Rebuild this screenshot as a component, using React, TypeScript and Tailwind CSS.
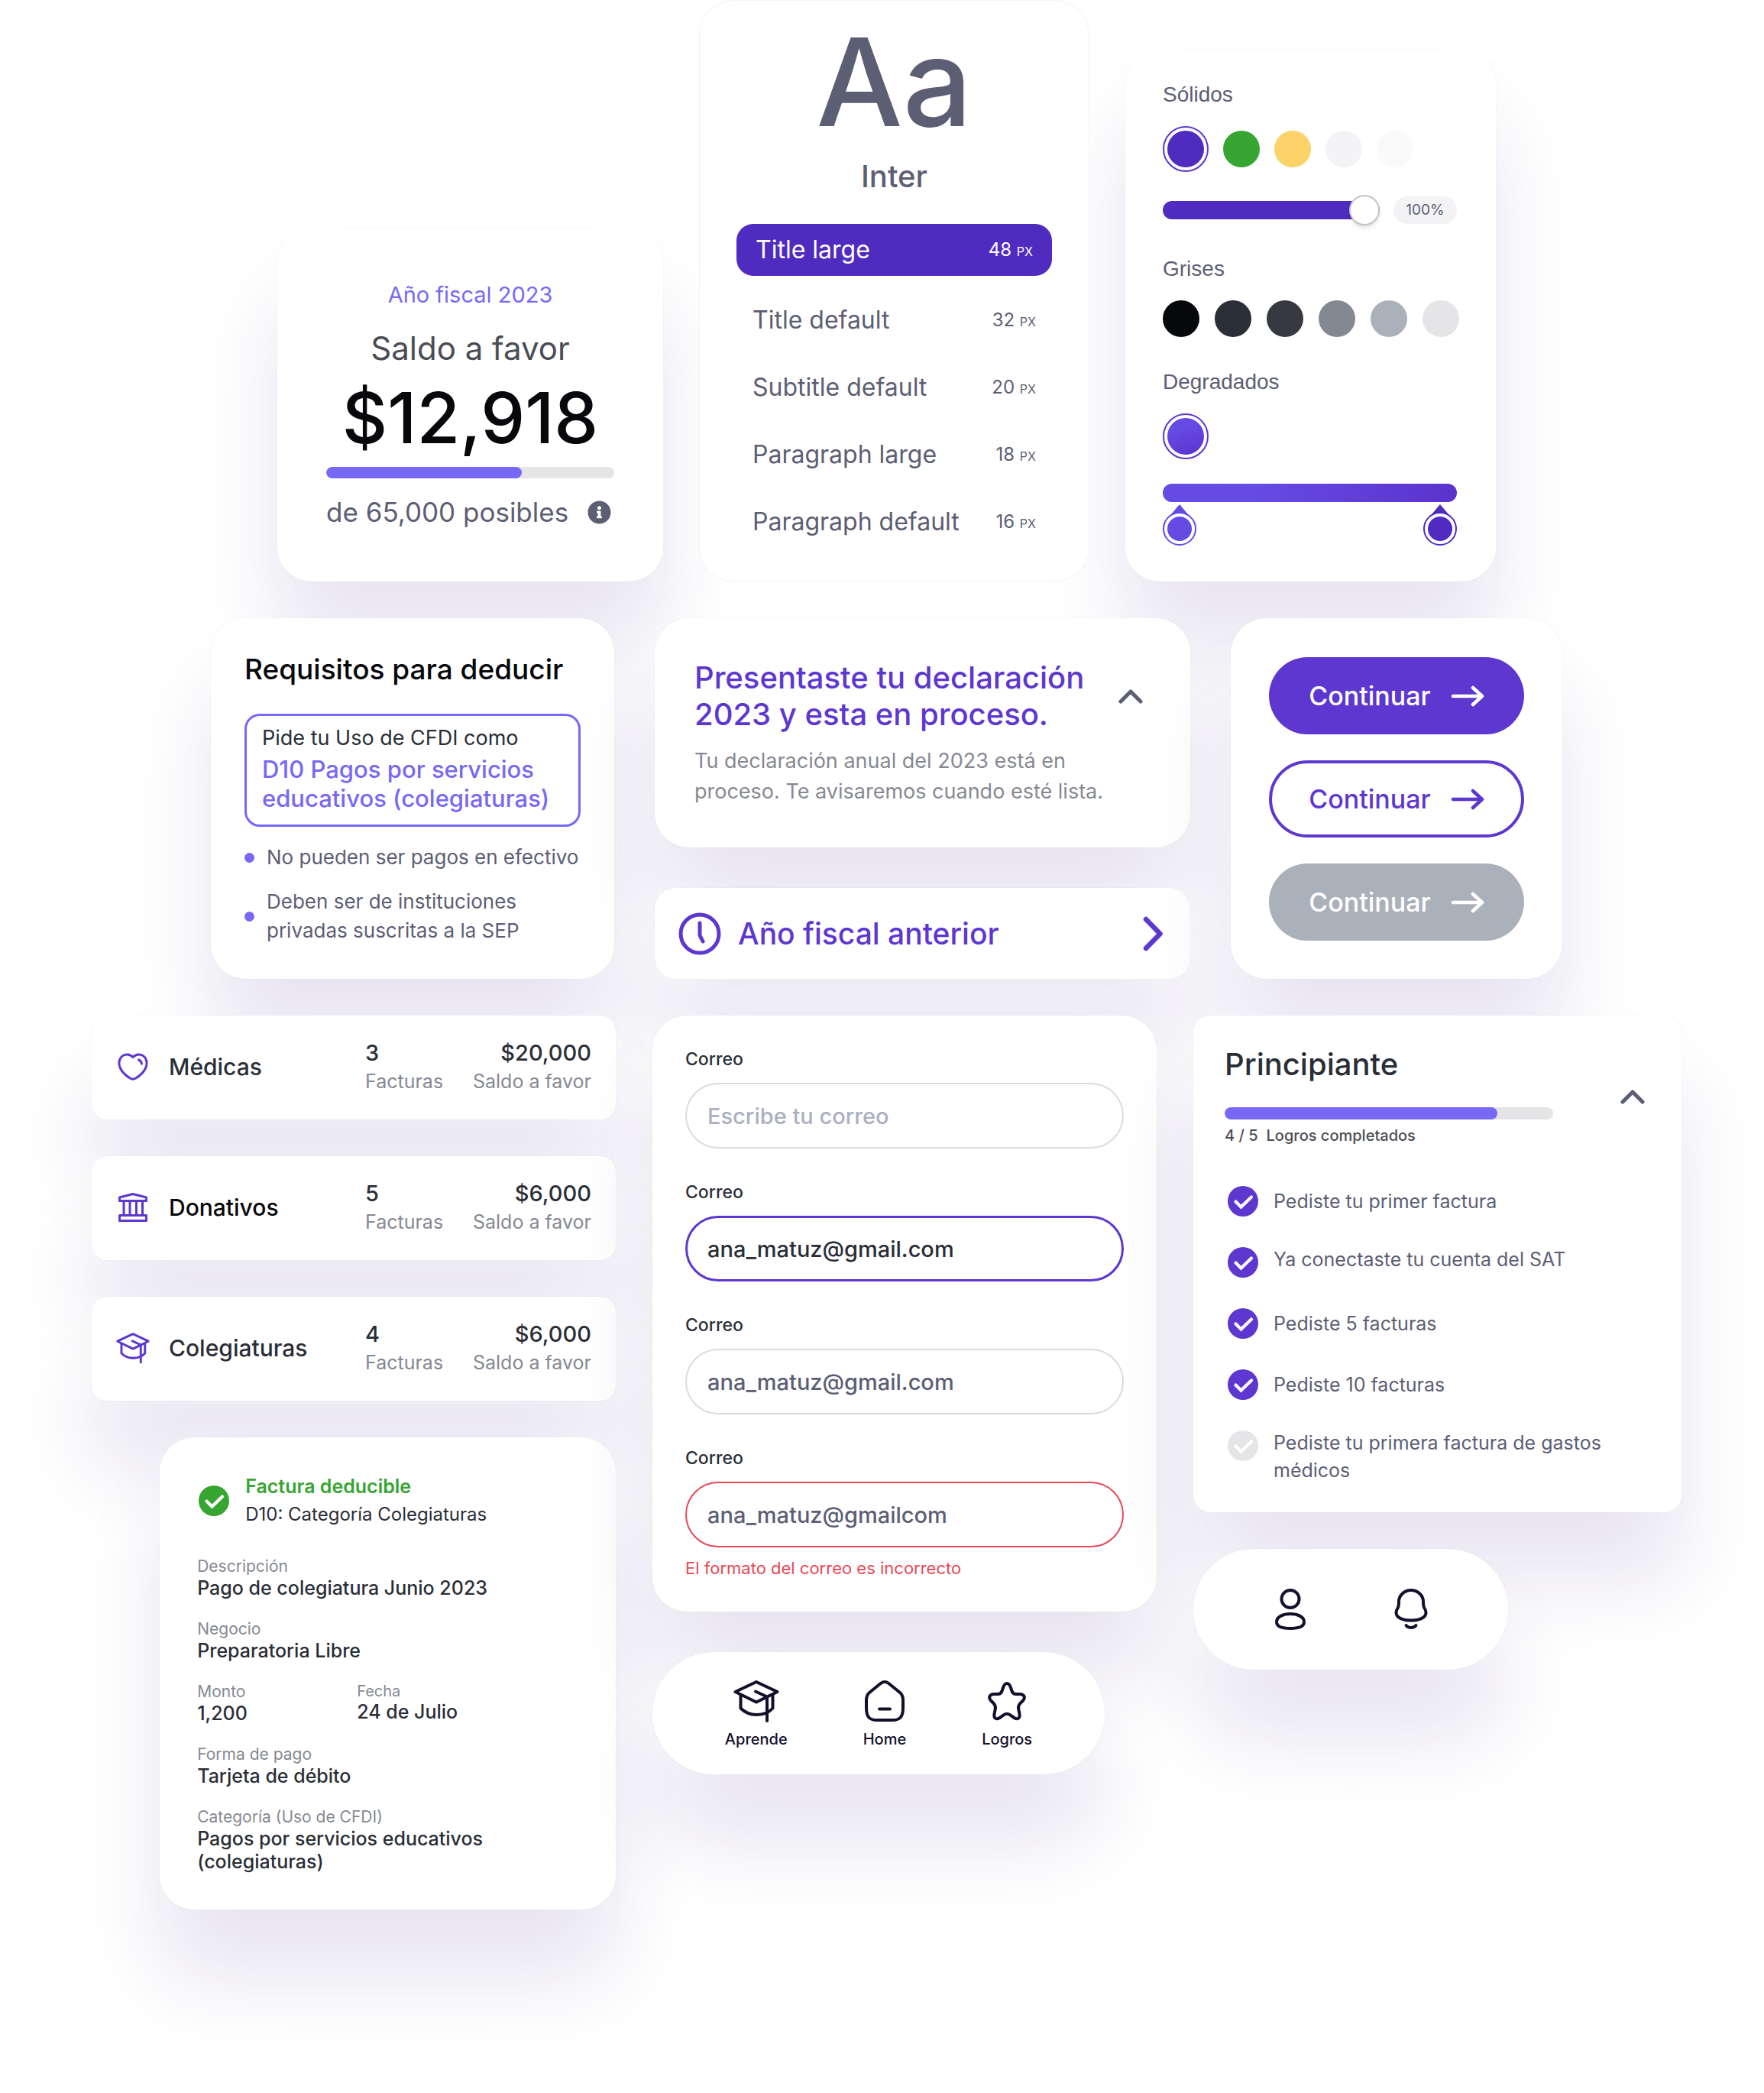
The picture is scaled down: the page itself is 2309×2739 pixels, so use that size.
import React from "react";
import { FaInfoCircle } from "react-icons/fa";

const SHADOW = "shadow-[0_0_2px_rgba(46,19,119,0.07),0_90px_110px_rgba(46,19,119,0.11)]";

type IconProps = { className?: string };

function CapIcon({ className }: IconProps) {
  return (
    <svg viewBox="0 0 60 56" fill="none" stroke="currentColor" strokeWidth="4" strokeLinecap="round" strokeLinejoin="round" className={className} aria-hidden="true">
      <path d="M30 3 57.5 16 30 29.5 2.5 16Z" />
      <path d="M9.5 20.5V37.5C15 43 22 46 30.5 46S46.5 43 51.5 37.5V20.5" />
      <path d="M29 15.5 44 22.5V54" />
    </svg>
  );
}

function HeartIcon({ className }: IconProps) {
  return (
    <svg viewBox="-2 -4 44 44" fill="none" stroke="currentColor" strokeWidth="3" strokeLinecap="round" strokeLinejoin="round" className={className} aria-hidden="true">
      <path d="M20 5.5C16 1.2 9.5.8 5.5 4.5 1.2 8.5 1 15 3.5 20 6.5 26 12 30.5 16.7 33.2 18.8 34.4 21.2 34.4 23.3 33.2 28 30.5 33.5 26 36.5 20 39 15 38.8 8.5 34.5 4.5 30.5.8 24 1.2 20 5.5Z" />
      <path d="M27.5 9C29.8 9.8 31.2 11.6 31.4 14.2" />
    </svg>
  );
}

function BankIcon({ className }: IconProps) {
  return (
    <svg viewBox="-3 -3 44 44" fill="none" stroke="currentColor" strokeWidth="3" strokeLinecap="round" strokeLinejoin="round" className={className} aria-hidden="true">
      <path d="M1.5 6 19 1.5 36.5 6V10.5H1.5Z" />
      <path d="M7 11V29M15 11V29M23.5 11V29M31.5 11V29" />
      <path d="M1.5 29.5H36.5V36.5H1.5Z" />
    </svg>
  );
}

function CheckIcon({ className }: IconProps) {
  return (
    <svg viewBox="0 0 44 44" className={className} aria-hidden="true">
      <circle cx="22" cy="22" r="20" fill="currentColor" />
      <path d="M12.5 22.5 19.5 29.5 33 16.500" fill="none" stroke="#fff" strokeWidth="4.2" strokeLinecap="round" strokeLinejoin="miter" />
    </svg>
  );
}

function ChevronUp({ className }: IconProps) {
  return (
    <svg viewBox="0 0 32 20" fill="none" stroke="currentColor" strokeWidth="5" strokeLinecap="round" strokeLinejoin="round" className={className} aria-hidden="true">
      <path d="M3 17 16 4 29 17" />
    </svg>
  );
}

function ArrowRight() {
  return (
    <svg viewBox="0 0 44 28" fill="none" stroke="currentColor" strokeWidth="4.5" strokeLinecap="round" strokeLinejoin="round" className="h-7 w-11" aria-hidden="true">
      <path d="M3 14H41M29 3 41 14 29 25" />
    </svg>
  );
}

function BalanceCard() {
  return (
    <section className={`min-w-0 rounded-[45px] bg-white px-16 pt-[68px] pb-[69px] text-center ${SHADOW}`}>
      <p className="text-[29px]/[36px] text-[#7768f6]">Año fiscal 2023</p>
      <h2 className="mt-[26px] text-[42px]/[52px] text-[#4b4d55]">Saldo a favor</h2>
      <p className="mt-[17px] text-[92px]/[96px] font-medium text-[#07080b]">$12,918</p>
      <div role="progressbar" aria-valuenow={68} aria-label="Saldo a favor" className="mt-4 h-[15px] overflow-hidden rounded-full bg-[#e5e5e7]">
        <div className="h-full w-[68%] rounded-full bg-[#7768f6]" />
      </div>
      <div className="mt-[22px] flex items-center justify-between pr-1">
        <p className="text-[35px]/[44px] text-[#5c5e74]">de 65,000 posibles</p>
        <button type="button" aria-label="Información" className="text-[#5c5e74]">
          <FaInfoCircle size={31} />
        </button>
      </div>
    </section>
  );
}

const STYLES = [
  { name: "Title large", size: 48 },
  { name: "Title default", size: 32 },
  { name: "Subtitle default", size: 20 },
  { name: "Paragraph large", size: 18 },
  { name: "Paragraph default", size: 16 },
];

function TypeCard() {
  return (
    <section className="relative min-w-0 rounded-[45px] border border-[#f3f3f5] bg-white px-12 pt-[26px] pb-[33px] text-[#5c5e74]">
      <p className="text-center text-[160px]/[160px] font-medium">Aa</p>
      <h2 className="mt-5 text-center text-[40px]/[48px] font-medium">Inter</h2>
      <ul className="mt-[38px]">
        {STYLES.map((s, i) => (
          <li key={s.name}>
            <button
              type="button"
              className={
                i === 0
                  ? "mb-3.5 flex h-[68px] w-full items-center justify-between rounded-[22px] bg-[#502bc0] px-[25px] text-white"
                  : "flex h-[88px] w-full items-center justify-between px-[21px]"
              }
            >
              <span className="text-[32px]/[40px]">{s.name}</span>
              <span className="text-2xl">
                {s.size} <span className="text-base">PX</span>
              </span>
            </button>
          </li>
        ))}
      </ul>
    </section>
  );
}

function RingSwatch({ label, className }: { label: string; className: string }) {
  return (
    <button type="button" aria-label={label} className="flex size-[60px] shrink-0 items-center justify-center rounded-full border-2 border-[#5d37d0]">
      <span className={`size-12 rounded-full ${className}`} />
    </button>
  );
}

function Pointer({ color }: { color: string }) {
  return (
    <svg viewBox="0 0 44 54" className="h-[54px] w-11" aria-hidden="true">
      <path d="M22 0 33 13H11Z" fill={color} />
      <circle cx="22" cy="32" r="21" fill="#fff" stroke={color} strokeWidth="2" />
      <circle cx="22" cy="32" r="16" fill={color} />
    </svg>
  );
}

const SOLIDS = [
  { label: "Verde", className: "bg-[#37a532]" },
  { label: "Amarillo", className: "bg-[#fbd369]" },
  { label: "Gris claro", className: "bg-[#f4f4f6]" },
  { label: "Blanco humo", className: "bg-[#fafafb]" },
];

const GREYS = [
  { label: "Negro", className: "bg-[#07080b]" },
  { label: "Gris 900", className: "bg-[#2a2e37]" },
  { label: "Gris 800", className: "bg-[#36393f]" },
  { label: "Gris 500", className: "bg-[#848893]" },
  { label: "Gris 400", className: "bg-[#abb1bb]" },
  { label: "Gris 200", className: "bg-[#e5e5e7]" },
];

function ColorsCard() {
  const heading = "font-['Liberation_Sans',Arial,sans-serif] text-[28px]/[32px] text-[#5c5e74]";
  return (
    <section className={`min-w-0 rounded-[45px] bg-white pt-[43px] pr-[51px] pb-[47px] pl-[49px] ${SHADOW}`}>
      <h3 className={heading}>Sólidos</h3>
      <div className="mt-[25px] flex items-center gap-[19px]">
        <RingSwatch label="Morado" className="bg-[#502bc0]" />
        {SOLIDS.map((c) => (
          <button key={c.label} type="button" aria-label={c.label} className={`size-12 shrink-0 rounded-full ${c.className}`} />
        ))}
      </div>
      <div className="mt-[30px] flex h-10 items-center gap-[18px]">
        <input
          type="range"
          aria-label="Opacidad"
          defaultValue={100}
          className="h-6 min-w-0 flex-1 appearance-none rounded-full bg-[#502bc0] [&::-webkit-slider-thumb]:size-10 [&::-webkit-slider-thumb]:appearance-none [&::-webkit-slider-thumb]:rounded-full [&::-webkit-slider-thumb]:border-2 [&::-webkit-slider-thumb]:border-[#c4c5cb] [&::-webkit-slider-thumb]:bg-white [&::-webkit-slider-thumb]:shadow-md"
        />
        <output className="flex h-9 w-[83px] items-center justify-center rounded-full bg-[#f3f3f5] text-[19px] text-[#5c5e74]">100%</output>
      </div>
      <h3 className={`mt-[41px] ${heading}`}>Grises</h3>
      <div className="mt-[25px] flex gap-5">
        {GREYS.map((c) => (
          <button key={c.label} type="button" aria-label={c.label} className={`size-12 shrink-0 rounded-full ${c.className}`} />
        ))}
      </div>
      <h3 className={`mt-[43px] ${heading}`}>Degradados</h3>
      <div className="mt-[25px]">
        <RingSwatch label="Degradado morado" className="bg-linear-160 from-[#654be4] from-30% to-[#5b32cd]" />
      </div>
      <div className="mt-8 h-6 rounded-full bg-linear-to-r from-[#654be4] from-30% to-[#5b32cd]" />
      <div className="mt-[3px] flex justify-between">
        <Pointer color="#654be4" />
        <Pointer color="#502bc0" />
      </div>
    </section>
  );
}

function RequirementsCard() {
  const items = ["No pueden ser pagos en efectivo", "Deben ser de instituciones privadas suscritas a la SEP"];
  return (
    <section className={`rounded-[45px] bg-white px-11 pt-[45px] pb-11 ${SHADOW}`}>
      <h2 className="text-[37px]/[44px] font-medium text-[#07080b]">Requisitos para deducir</h2>
      <div className="mt-9 rounded-[20px] border-3 border-[#7768f6] px-5 pt-3 pb-[15px]">
        <p className="text-[27px]/[34px] text-[#2a2e37]">Pide tu Uso de CFDI como</p>
        <p className="mt-[5px] text-[31px]/[38px] font-medium text-[#7768f6]">D10 Pagos por servicios educativos (colegiaturas)</p>
      </div>
      <ul className="mt-[21px] flex flex-col gap-5">
        {items.map((t) => (
          <li key={t} className="flex items-center gap-4 text-[26px]/[38px] text-[#5c5e74]">
            <span className="size-[13px] shrink-0 rounded-full bg-[#7768f6]" />
            <span>{t}</span>
          </li>
        ))}
      </ul>
    </section>
  );
}

function DeclarationCard() {
  return (
    <section className={`rounded-[45px] bg-white pt-[54px] pr-[62px] pb-[53px] pl-[52px] ${SHADOW}`}>
      <div className="flex items-center justify-between">
        <h2 className="w-[530px] text-[40px]/[48px] font-medium text-[#5d37d0]">Presentaste tu declaración 2023 y esta en proceso.</h2>
        <button type="button" aria-label="Contraer" className="text-[#5c5e74]">
          <ChevronUp className="h-5 w-8" />
        </button>
      </div>
      <p className="mt-[17px] max-w-[555px] text-[27px]/[40px] text-[#868993]">Tu declaración anual del 2023 está en proceso. Te avisaremos cuando esté lista.</p>
    </section>
  );
}

function PreviousYear() {
  return (
    <a href="#anterior" className={`flex h-[119px] items-center rounded-[27px] bg-white pr-[34px] pl-[31px] text-[#5d37d0] ${SHADOW}`}>
      <svg viewBox="0 0 56 56" fill="none" stroke="currentColor" strokeWidth="5" strokeLinecap="round" strokeLinejoin="round" className="size-14" aria-hidden="true">
        <circle cx="28" cy="28" r="25" />
        <path d="M28 14V30L32 38" />
      </svg>
      <span className="ml-[22px] flex-1 text-[39px]/[48px] font-medium">Año fiscal anterior</span>
      <svg viewBox="0 0 28 48" fill="none" stroke="currentColor" strokeWidth="6.5" strokeLinecap="round" strokeLinejoin="round" className="h-12 w-7" aria-hidden="true">
        <path d="M4 5 22.5 24 4 43" />
      </svg>
    </a>
  );
}

function ButtonsCard() {
  const base = "flex h-[101px] items-center justify-center gap-[26px] rounded-full text-[34px]/[42px] font-medium";
  return (
    <section className={`flex flex-col gap-[34px] rounded-[47px] bg-white px-[50px] pt-[51px] pb-[49px] ${SHADOW}`}>
      <button type="button" className={`${base} bg-[#5d37d0] text-white`}>
        Continuar <ArrowRight />
      </button>
      <button type="button" className={`${base} border-4 border-[#5d37d0] text-[#5d37d0]`}>
        Continuar <ArrowRight />
      </button>
      <button type="button" disabled className={`${base} bg-[#abb1bb] text-white`}>
        Continuar <ArrowRight />
      </button>
    </section>
  );
}

function CategoryCard({ icon, name, nameClass, count, amount }: { icon: React.ReactNode; name: string; nameClass: string; count: number; amount: string }) {
  return (
    <section className={`flex items-center rounded-[20px] bg-white pt-[30px] pr-8 pb-8 pl-8 ${SHADOW}`}>
      <span className="text-[#5d37d0]">{icon}</span>
      <h3 className={`ml-[25px] flex-1 text-[30px]/[38px] font-medium ${nameClass}`}>{name}</h3>
      <div className="flex w-[296px] justify-between text-[#2a2e37]">
        <p className="text-[29px]/[38px] font-medium">
          {count}
          <span className="block text-[25px]/[36px] font-normal text-[#868993]">Facturas</span>
        </p>
        <p className="text-right text-[29px]/[38px] font-medium">
          {amount}
          <span className="block text-[25px]/[36px] font-normal text-[#868993]">Saldo a favor</span>
        </p>
      </div>
    </section>
  );
}

function Field({ label, value, small }: { label: string; value: string; small?: boolean }) {
  return (
    <div>
      <dt className={small ? "text-[20px]/[24px] text-[#868993]" : "text-[21px]/[26px] text-[#868993]"}>{label}</dt>
      <dd className="text-[25px]/[30px] font-medium text-[#2a2e37]">{value}</dd>
    </div>
  );
}

function InvoiceCard() {
  return (
    <section className={`ml-auto w-[87%] rounded-[45px] bg-white px-[49px] pt-[46px] pb-12 ${SHADOW}`}>
      <div className="flex items-center gap-[19px]">
        <CheckIcon className="size-11 text-[#37a532]" />
        <div>
          <h3 className="text-[25px]/[36px] font-semibold text-[#37a532]">Factura deducible</h3>
          <p className="text-2xl/[38px] text-[#2a2e37]">D10: Categoría Colegiaturas</p>
        </div>
      </div>
      <dl className="mt-9 flex flex-col gap-[26px]">
        <Field label="Descripción" value="Pago de colegiatura Junio 2023" />
        <Field label="Negocio" value="Preparatoria Libre" />
        <div className="grid grid-cols-[209px_1fr]">
          <Field label="Monto" value="1,200" />
          <Field label="Fecha" value="24 de Julio" small />
        </div>
        <Field label="Forma de pago" value="Tarjeta de débito" />
        <div className="max-w-[400px]">
          <Field label="Categoría (Uso de CFDI)" value="Pagos por servicios educativos (colegiaturas)" />
        </div>
      </dl>
    </section>
  );
}

const INPUTS = [
  { id: "correo-1", value: "", className: "border-2 border-[#dcdce0] px-[27px]" },
  { id: "correo-2", value: "ana_matuz@gmail.com", className: "border-3 border-[#5d37d0] px-[26px] text-[#2a2e37]" },
  { id: "correo-3", value: "ana_matuz@gmail.com", className: "border-2 border-[#dcdce0] px-[27px] text-[#5c5e74]" },
  { id: "correo-4", value: "ana_matuz@gmailcom", className: "border-2 border-[#e84855] px-[27px] text-[#5c5e74]" },
];

function FormCard() {
  return (
    <form className={`rounded-[45px] bg-white px-[43px] pt-[43px] pb-[43px] ${SHADOW}`}>
      <div className="flex flex-col gap-[43px]">
        {INPUTS.map((f) => (
          <div key={f.id}>
            <label htmlFor={f.id} className="block text-[23px]/[28px] font-medium text-[#2a2e37]">
              Correo
            </label>
            <input
              id={f.id}
              type="text"
              defaultValue={f.value}
              placeholder="Escribe tu correo"
              className={`mt-[17px] block h-[86px] w-full rounded-full bg-white text-[29px] font-medium outline-none placeholder:text-[#abb0bf] ${f.className}`}
            />
          </div>
        ))}
      </div>
      <p className="mt-[13px] text-[22px]/[28px] text-[#e84855]">El formato del correo es incorrecto</p>
    </form>
  );
}

function BottomNav() {
  const link = "flex flex-col items-center gap-2.5";
  return (
    <nav className={`mt-[53px] flex w-[592px] max-w-full justify-center gap-[99px] rounded-full bg-white pt-9 pb-[34px] text-[20px]/[24px] font-medium text-[#14102b] ${SHADOW}`}>
      <a href="#aprende" className={link}>
        <CapIcon className="h-14 w-[60px]" />
        Aprende
      </a>
      <a href="#home" className={link}>
        <svg viewBox="-2 -1 56 56" fill="none" stroke="currentColor" strokeWidth="4" strokeLinecap="round" strokeLinejoin="round" className="size-14" aria-hidden="true">
          <path d="M21 3.8Q26 .2 31 3.8L46 16Q50 19.5 50 26V36C50 48 46 52 36 52H16C6 52 2 48 2 36V26Q2 19.5 6 16Z" />
          <path d="M19 37.5H33" />
        </svg>
        Home
      </a>
      <a href="#logros" className={link}>
        <svg viewBox="-3 -3 56 56" fill="none" stroke="currentColor" strokeWidth="4" strokeLinecap="round" strokeLinejoin="round" className="size-14" aria-hidden="true">
          <path d="M25 2C27.5 2 28.8 4 30 7.5L31.500 12C32.500 15 34 16 37 16H42C48 16.300 49.500 20.500 46 24.500L42 28.500C40 30.800 39.500 32.500 40.200 35.500L41.500 42C42.500 47.500 39 50 34.500 47L29 43.200C26.500 41.500 23.500 41.500 21 43.200L15.500 47C11 50 7.500 47.500 8.500 42L9.800 35.500C10.500 32.500 10 30.800 8 28.500L4 24.500C.500 20.500 2 16.300 8 16H13C16 16 17.500 15 18.500 12L20 7.500C21.200 4 22.500 2 25 2Z" />
        </svg>
        Logros
      </a>
    </nav>
  );
}

const GOALS = [
  { text: "Pediste tu primer factura", done: true, align: "items-center" },
  { text: "Ya conectaste tu cuenta del SAT", done: true, align: "items-start" },
  { text: "Pediste 5 facturas", done: true, align: "items-center" },
  { text: "Pediste 10 facturas", done: true, align: "items-center" },
  { text: "Pediste tu primera factura de gastos médicos", done: false, align: "items-start" },
];

function GoalsCard() {
  return (
    <section className={`rounded-[22px] bg-white pt-10 pr-12 pb-[37px] pl-[41px] ${SHADOW}`}>
      <div className="flex items-center justify-between">
        <div className="max-w-[430px] flex-1">
          <h2 className="text-[40px]/[48px] font-medium text-[#2a2e37]">Principiante</h2>
          <div role="progressbar" aria-valuenow={83} aria-label="Logros completados" className="mt-8 h-4 overflow-hidden rounded-full bg-[#e5e5e7]">
            <div className="h-full w-[83%] rounded-full bg-[#7768f6]" />
          </div>
          <p className="mt-[7px] flex gap-[11px] text-[20px]/[28px] font-medium text-[#4b4d55]">
            <span>4 / 5</span>
            <span>Logros completados</span>
          </p>
        </div>
        <button type="button" aria-label="Contraer" className="text-[#5c5e74]">
          <ChevronUp className="h-5 w-8" />
        </button>
      </div>
      <ul className="mt-[50px] flex flex-col gap-9 pl-0.5">
        {GOALS.map((g) => (
          <li key={g.text} className={`flex gap-[18px] text-[25px]/[36px] text-[#5c5e74] ${g.align}`}>
            <CheckIcon className={g.done ? "size-11 shrink-0 text-[#5d37d0]" : "size-11 shrink-0 text-[#e5e5e7]"} />
            <span>{g.text}</span>
          </li>
        ))}
      </ul>
    </section>
  );
}

function ProfileBar() {
  return (
    <nav className={`flex w-[412px] max-w-full justify-center gap-[114px] rounded-full bg-white py-[52px] text-[#14102b] ${SHADOW}`}>
      <a href="#perfil" aria-label="Perfil">
        <svg viewBox="0 0 44 54" fill="none" stroke="currentColor" strokeWidth="4" strokeLinecap="round" strokeLinejoin="round" className="h-[54px] w-11" aria-hidden="true">
          <circle cx="22" cy="13.5" r="11.5" />
          <path d="M22 33C31 33 40 36.5 40 43.5 40 50 33 52 22 52S4 50 4 43.5C4 36.5 13 33 22 33Z" />
        </svg>
      </a>
      <a href="#avisos" aria-label="Notificaciones">
        <svg viewBox="0 0 44 54" fill="none" stroke="currentColor" strokeWidth="4" strokeLinecap="round" strokeLinejoin="round" className="h-[54px] w-11" aria-hidden="true">
          <path d="M22 2C31 2 38 9 38 17 38 21.5 38 23 39.5 25.5 41.2 28 41.5 29.5 41.5 31.5 41.5 38.5 32 41.5 22 41.5S2.5 38.5 2.5 31.5C2.5 29.5 2.8 28 4.5 25.5 6 23 6 21.5 6 17 6 9 13 2 22 2Z" />
          <path d="M15.5 48C18.5 52 25.5 52 28.5 48" />
        </svg>
      </a>
    </nav>
  );
}

export default function App() {
  return (
    <main className="flex flex-col gap-12 overflow-hidden bg-white pb-60 pl-3 font-['Inter',sans-serif]">
      <div className="mx-auto grid w-full max-w-[1595px] items-end gap-[47px] lg:grid-cols-[505fr_511fr_485fr]">
        <BalanceCard />
        <TypeCard />
        <ColorsCard />
      </div>
      <div className="mx-auto grid w-full max-w-[1769px] gap-[53px] lg:grid-cols-[528fr_701fr_434fr]">
        <RequirementsCard />
        <div className="flex flex-col justify-between">
          <DeclarationCard />
          <PreviousYear />
        </div>
        <ButtonsCard />
      </div>
      <div className="mx-auto grid w-full max-w-[2081px] items-start gap-12 lg:grid-cols-[686fr_660fr_639fr]">
        <div className="flex flex-col gap-12">
          <CategoryCard icon={<HeartIcon className="size-11" />} name="Médicas" nameClass="text-[#2a2e37]" count={3} amount="$20,000" />
          <CategoryCard icon={<BankIcon className="size-11" />} name="Donativos" nameClass="text-[#07080b]" count={5} amount="$6,000" />
          <CategoryCard icon={<CapIcon className="size-11" />} name="Colegiaturas" nameClass="text-[#2a2e37]" count={4} amount="$6,000" />
          <InvoiceCard />
        </div>
        <div>
          <FormCard />
          <BottomNav />
        </div>
        <div className="flex flex-col gap-12">
          <GoalsCard />
          <ProfileBar />
        </div>
      </div>
    </main>
  );
}
